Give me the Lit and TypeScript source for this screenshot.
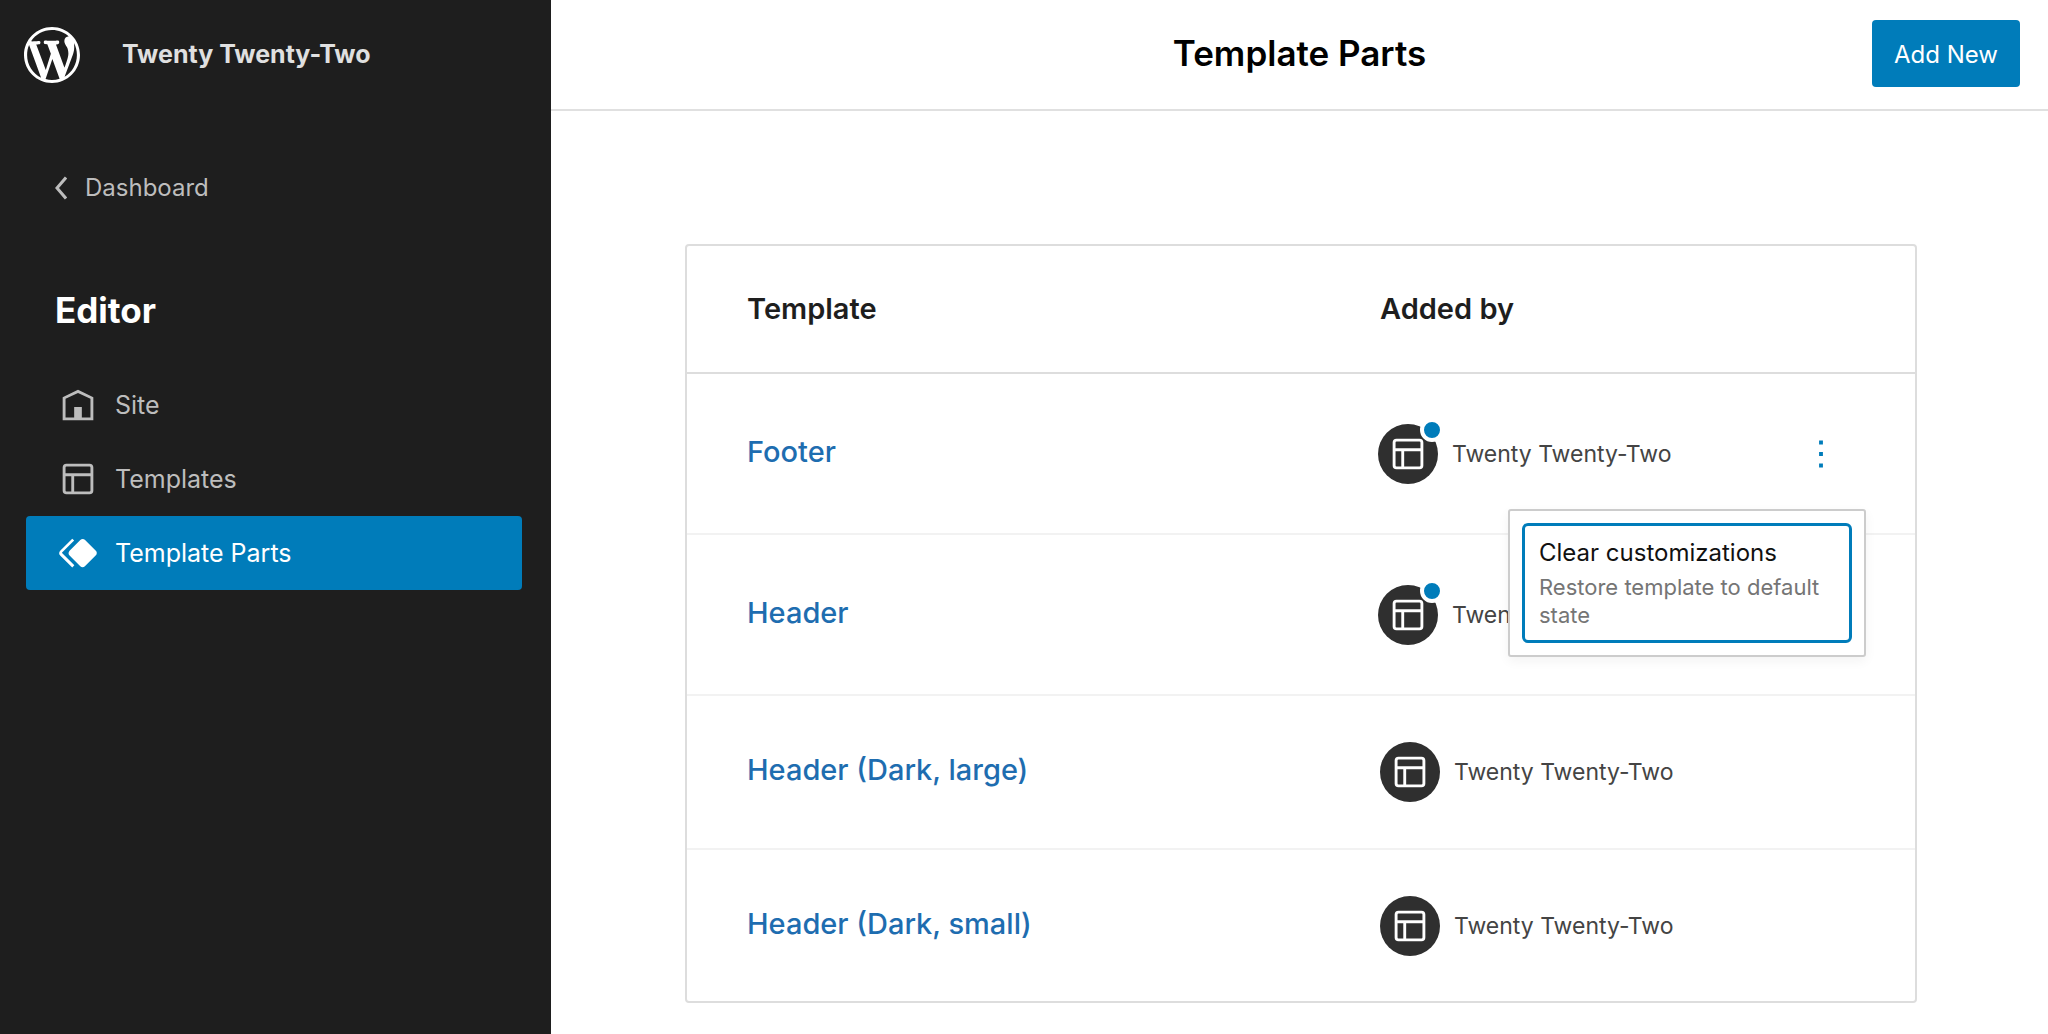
import { LitElement, html, css, svg } from "lit";
import { customElement, state } from "lit/decorators.js";
import { classMap } from "lit/directives/class-map.js";

const icons = {
  wordpress: svg`<path d="M20 10c0-5.51-4.49-10-10-10C4.48 0 0 4.49 0 10c0 5.52 4.48 10 10 10 5.51 0 10-4.48 10-10zM7.78 15.37L4.37 6.22c.55-.02 1.17-.08 1.17-.08.5-.06.44-1.13-.06-1.11 0 0-1.45.11-2.37.11-.18 0-.37 0-.58-.01C4.12 2.69 6.87 1.11 10 1.11c2.33 0 4.45.87 6.05 2.34-.68-.11-1.65.39-1.65 1.58 0 .74.45 1.36.9 2.1.35.61.55 1.36.55 2.46 0 1.49-1.4 5-1.4 5l-3.03-8.37c.54-.02.82-.17.82-.17.5-.05.44-1.25-.06-1.22 0 0-1.44.12-2.38.12-.87 0-2.33-.12-2.33-.12-.5-.03-.56 1.2-.06 1.22l.92.08 1.26 3.41zM17.41 10c.24-.64.74-1.87.43-4.25.7 1.29 1.05 2.71 1.05 4.25 0 3.29-1.73 6.24-4.4 7.78.97-2.59 1.94-5.2 2.92-7.78zM6.1 18.09C3.12 16.65 1.11 13.53 1.11 10c0-1.3.23-2.48.72-3.59C3.25 10.3 4.67 14.2 6.1 18.09zm4.03-6.63l2.58 6.98c-.86.29-1.76.45-2.71.45-.79 0-1.57-.11-2.29-.33.81-2.38 1.62-4.74 2.42-7.1z"/>`,
  home: svg`<path d="M12 4L4 7.9V20h16V7.9L12 4zm6.5 14.5H14V13h-4v5.500H5.500V8.800L12 5.700l6.500 3.100v9.700z"/>`,
  layout: svg`<path d="M18 5.5H6a.5.5 0 00-.5.5v3h13V6a.5.5 0 00-.5-.5zm.5 5H10v8h8a.5.5 0 00.5-.5v-7.5zm-10 0h-3V18a.5.5 0 00.5.5h2.5v-8zM6 4h12a2 2 0 012 2v12a2 2 0 01-2 2H6a2 2 0 01-2-2V6a2 2 0 012-2z"/>`,
  parts: svg`<path d="M21.3 10.8l-5.6-5.6c-.7-.7-1.8-.7-2.5 0l-5.6 5.6c-.7.7-.7 1.8 0 2.5l5.6 5.6c.3.3.8.5 1.2.5s.9-.2 1.2-.5l5.6-5.6c.8-.7.8-1.9.1-2.5zm-17.6 1L10 5.5l-1-1-6.3 6.3c-.7.7-.7 1.8 0 2.5L9 19.5l1.1-1.1-6.3-6.3c-.2 0-.2-.2-.1-.3z"/>`,
  more: svg`<path d="M13 19h-2v-2h2v2zm0-6h-2v-2h2v2zm0-6h-2V5h2v2z"/>`,
};

interface TemplatePart {
  title: string;
  theme: string;
  customized: boolean;
}

@customElement("app-root")
export class AppRoot extends LitElement {
  @state() private openMenu: number = 0;

  private nav = [
    { label: "Site", icon: icons.home, active: false },
    { label: "Templates", icon: icons.layout, active: false },
    { label: "Template Parts", icon: icons.parts, active: true },
  ];

  private parts: TemplatePart[] = [
    { title: "Footer", theme: "Twenty Twenty-Two", customized: true },
    { title: "Header", theme: "Twenty Twenty-Two", customized: true },
    { title: "Header (Dark, large)", theme: "Twenty Twenty-Two", customized: false },
    { title: "Header (Dark, small)", theme: "Twenty Twenty-Two", customized: false },
  ];

  static styles = css`
    :host {
      display: grid;
      grid-template-columns: 551px minmax(0, 1fr);
      min-height: 100vh;
      background: #fff;
      color: #1e1e1e;
      font-family: Inter, "Liberation Sans", sans-serif;
      font-size: 24px;
      line-height: 32px;
    }
    *, *::after { box-sizing: border-box; }
    a { color: inherit; text-decoration: none; }
    button { font: inherit; cursor: pointer; }
    svg { display: block; fill: currentColor; flex: none; }
    h1, h2, p, ul { margin: 0; padding: 0; }
    ul { list-style: none; }

    .sidebar { background: #1e1e1e; color: #bdbdbd; }
    .brand { display: flex; align-items: center; gap: 42px; height: 110px; padding-left: 24px; }
    .brand svg { color: #fff; width: 56px; height: 56px; }
    .site { padding-bottom: 2px; color: #e0e0e0; font-size: 25px; font-weight: 700; }
    .back { display: flex; align-items: center; gap: 18px; margin: 62px 0 0 55px; }
    .back svg { fill: none; stroke: currentColor; stroke-width: 3; width: 12px; height: 24px; }
    .editor { margin: 86px 0 38px 55px; color: #fff; font-size: 35px; line-height: 40px; font-weight: 700; }
    .nav { padding: 0 29px 0 26px; }
    .link { display: flex; align-items: center; gap: 14px; height: 74px; padding-left: 29px; border-radius: 4px; font-size: 25px; }
    .link.active { background: #007cba; color: #fff; }
    .icon { width: 46px; height: 46px; }

    .top {
      display: grid;
      grid-template-columns: 1fr auto 1fr;
      align-items: center;
      height: 111px;
      padding: 0 28px 2px;
      border-bottom: 2px solid #e0e0e0;
    }
    .title { grid-column: 2; padding-bottom: 2px; color: #000; font-size: 35px; line-height: 44px; font-weight: 600; }
    .add {
      justify-self: end;
      height: 67px;
      padding: 2px 22px 0;
      border: 0;
      border-radius: 4px;
      background: #007cba;
      color: #fff;
    }
    .content { padding: 133px 131px 30px 134px; }
    .card { border: 2px solid #ddd; border-radius: 4px; }
    table { width: 100%; border-collapse: separate; border-spacing: 0; table-layout: fixed; }
    th { height: 128px; text-align: left; font-size: 29px; font-weight: 600; border-bottom: 2px solid #ddd; }
    td { height: 154px; border-bottom: 2px solid #f2f2f2; }
    tr.custom td { height: 161px; }
    tr:last-child td { height: 151px; border-bottom: 0; }
    th, td { padding: 0; vertical-align: middle; }
    .name { width: 693px; padding-left: 60px; font-size: 29px; line-height: 40px; }
    td.name { padding-bottom: 4px; color: #1e6db0; font-weight: 500; }
    .actions { width: 190px; }
    .by { display: flex; align-items: center; gap: 14px; color: #444; font-size: 23px; }
    .custom .by { margin-left: -2px; }
    .avatar {
      position: relative;
      display: grid;
      place-items: center;
      flex: none;
      width: 60px;
      height: 60px;
      border-radius: 50%;
      background: #2f2f2f;
      color: #fff;
    }
    .custom .avatar::after {
      content: "";
      position: absolute;
      top: -6px;
      right: -6px;
      width: 24px;
      height: 24px;
      border: 4px solid #fff;
      border-radius: 50%;
      background: #007cba;
    }
    .menu-anchor { position: relative; width: 46px; margin-left: 73px; }
    .more { display: block; padding: 0; border: 0; background: none; color: #007cba; }
    .menu {
      position: absolute;
      z-index: 1;
      top: 78px;
      right: -22px;
      width: 358px;
      padding: 12px;
      background: #fff;
      border: 2px solid #ccc;
      border-radius: 3px;
      box-shadow: 0 4px 12px rgba(0, 0, 0, 0.05);
    }
    .reset {
      display: block;
      width: 100%;
      padding: 11px 14px;
      border: 3px solid #007cba;
      border-radius: 6px;
      background: #fff;
      color: #111;
      text-align: left;
    }
    .reset span { display: block; }
    .reset .hint { padding-top: 4px; color: #757575; font-size: 22px; line-height: 28px; }
  `;

  private icon(shape: unknown) {
    return html`<svg class="icon" viewBox="0 0 24 24" aria-hidden="true">${shape}</svg>`;
  }

  private toggle(index: number) {
    this.openMenu = this.openMenu === index ? -1 : index;
  }

  private row(part: TemplatePart, index: number) {
    return html`<tr class=${classMap({ custom: part.customized })}>
      <td class="name"><a href="#">${part.title}</a></td>
      <td>
        <div class="by"><span class="avatar">${this.icon(icons.layout)}</span><span>${part.theme}</span></div>
      </td>
      <td>
        ${index === 0
          ? html`<div class="menu-anchor">
              <button class="more" aria-label="Actions" @click=${() => this.toggle(index)}>${this.icon(icons.more)}</button>
              ${this.openMenu === index
                ? html`<div class="menu">
                    <button class="reset">
                      <span>Clear customizations</span>
                      <span class="hint">Restore template to default state</span>
                    </button>
                  </div>`
                : null}
            </div>`
          : null}
      </td>
    </tr>`;
  }

  render() {
    return html`
      <aside class="sidebar">
        <div class="brand">
          <svg viewBox="0 0 20 20" aria-hidden="true">${icons.wordpress}</svg>
          <a class="site" href="#">Twenty Twenty-Two</a>
        </div>
        <a class="back" href="#">
          <svg viewBox="0 0 12 24" aria-hidden="true"><path d="M11 1.500L2 12l9 10.500" /></svg>
          <span>Dashboard</span>
        </a>
        <h2 class="editor">Editor</h2>
        <nav class="nav">
          <ul>
            ${this.nav.map(
              (n) => html`<li>
                <a class=${classMap({ link: true, active: n.active })} href="#">${this.icon(n.icon)}<span>${n.label}</span></a>
              </li>`
            )}
          </ul>
        </nav>
      </aside>
      <main>
        <header class="top">
          <h1 class="title">Template Parts</h1>
          <button class="add">Add New</button>
        </header>
        <div class="content">
          <div class="card">
            <table>
              <thead>
                <tr>
                  <th class="name">Template</th>
                  <th>Added by</th>
                  <th class="actions"></th>
                </tr>
              </thead>
              <tbody>
                ${this.parts.map((p, i) => this.row(p, i))}
              </tbody>
            </table>
          </div>
        </div>
      </main>
    `;
  }
}
